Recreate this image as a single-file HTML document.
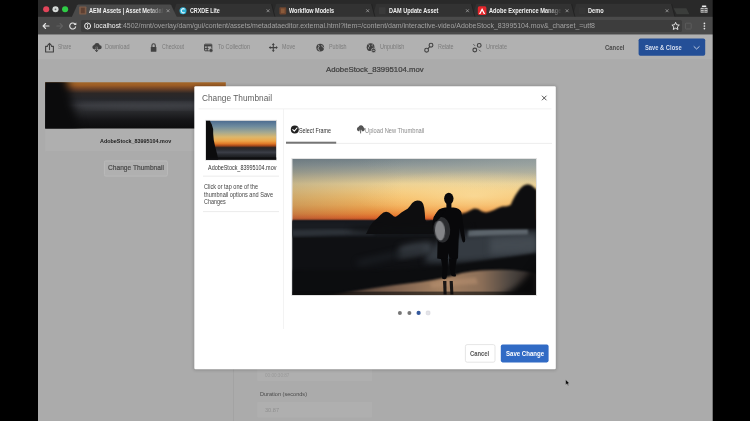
<!DOCTYPE html>
<html lang="en"><head><meta charset="utf-8"><title>AEM Assets | Asset Metadata Editor</title>
<style>
html,body{margin:0;padding:0;background:#000;}
body{width:750px;height:421px;overflow:hidden;font-family:"Liberation Sans",sans-serif;}
#root{position:relative;width:750px;height:421px;overflow:hidden;background:#000;}
#bg{position:absolute;left:0;top:0;width:750px;height:421px;display:block;}
.t{position:absolute;white-space:nowrap;transform-origin:0 50%;display:block;}

</style></head>
<body>
<div id="root">
<svg id="bg" width="750" height="421" viewBox="0 0 750 421">
<defs>
  <linearGradient id="sky" gradientUnits="userSpaceOnUse" x1="0" y1="159" x2="0" y2="295">
    <stop offset="0.0000" stop-color="#76848a"/>
    <stop offset="0.0441" stop-color="#8a9494"/>
    <stop offset="0.0956" stop-color="#a8a896"/>
    <stop offset="0.1397" stop-color="#cbbd95"/>
    <stop offset="0.1838" stop-color="#ead094"/>
    <stop offset="0.2353" stop-color="#f4ca7e"/>
    <stop offset="0.2868" stop-color="#f6be68"/>
    <stop offset="0.3382" stop-color="#f4ae56"/>
    <stop offset="0.3750" stop-color="#f09a44"/>
    <stop offset="0.4044" stop-color="#ec8636"/>
    <stop offset="0.4301" stop-color="#e2682a"/>
    <stop offset="0.4456" stop-color="#c04e20"/>
    <stop offset="0.4559" stop-color="#4a2c26"/>
    <stop offset="0.4669" stop-color="#1d2127"/>
    <stop offset="1.0000" stop-color="#1d2127"/>
  </linearGradient>
  <linearGradient id="sea" x1="0" y1="0" x2="0" y2="1">
    <stop offset="0" stop-color="#23272e"/>
    <stop offset="0.12" stop-color="#3a4048"/>
    <stop offset="0.22" stop-color="#1d2025"/>
    <stop offset="0.5" stop-color="#121316"/>
    <stop offset="1" stop-color="#0e0e10"/>
  </linearGradient>
  <linearGradient id="sand" x1="0" y1="0" x2="1" y2="0">
    <stop offset="0" stop-color="#382b25"/>
    <stop offset="0.32" stop-color="#7a5e4c"/>
    <stop offset="0.56" stop-color="#a68262"/>
    <stop offset="0.74" stop-color="#8c6f58"/>
    <stop offset="0.88" stop-color="#4c4540"/>
    <stop offset="1" stop-color="#262120"/>
  </linearGradient>
  <linearGradient id="tsky" gradientUnits="userSpaceOnUse" x1="0" y1="120.7" x2="0" y2="159.7">
    <stop offset="0" stop-color="#4c6c90"/>
    <stop offset="0.15" stop-color="#6f8c9e"/>
    <stop offset="0.30" stop-color="#a5a990"/>
    <stop offset="0.42" stop-color="#dcb76c"/>
    <stop offset="0.52" stop-color="#eda548"/>
    <stop offset="0.59" stop-color="#e07a28"/>
    <stop offset="0.64" stop-color="#a84a1a"/>
    <stop offset="0.69" stop-color="#2e2624"/>
    <stop offset="0.75" stop-color="#2b2d33"/>
    <stop offset="0.81" stop-color="#3b3e47"/>
    <stop offset="0.88" stop-color="#26282d"/>
    <stop offset="1" stop-color="#121315"/>
  </linearGradient>
  <linearGradient id="bsky" gradientUnits="userSpaceOnUse" x1="0" y1="82" x2="0" y2="129">
    <stop offset="0" stop-color="#a4692b"/>
    <stop offset="0.07" stop-color="#9c5c25"/>
    <stop offset="0.15" stop-color="#6a4026"/>
    <stop offset="0.24" stop-color="#2c2726"/>
    <stop offset="0.36" stop-color="#26272b"/>
    <stop offset="0.50" stop-color="#393a3f"/>
    <stop offset="0.64" stop-color="#27282b"/>
    <stop offset="0.82" stop-color="#141416"/>
    <stop offset="1" stop-color="#0c0c0d"/>
  </linearGradient>
  <radialGradient id="glow" cx="0.5" cy="0.5" r="0.5">
    <stop offset="0" stop-color="#fce6ac" stop-opacity="0.6"/>
    <stop offset="0.5" stop-color="#fbe0a0" stop-opacity="0.3"/>
    <stop offset="1" stop-color="#fbe0a0" stop-opacity="0"/>
  </radialGradient>
  <radialGradient id="rlight" cx="0.5" cy="0.5" r="0.5">
    <stop offset="0" stop-color="#c8ccc0" stop-opacity="0.36"/>
    <stop offset="0.55" stop-color="#c8ccc0" stop-opacity="0.16"/>
    <stop offset="1" stop-color="#c8ccc0" stop-opacity="0"/>
  </radialGradient>
  <linearGradient id="lshade" x1="0" y1="0" x2="1" y2="0">
    <stop offset="0" stop-color="#4a5660" stop-opacity="0.22"/>
    <stop offset="0.45" stop-color="#4a5660" stop-opacity="0"/>
    <stop offset="1" stop-color="#4a5660" stop-opacity="0"/>
  </linearGradient>
  <filter color-interpolation-filters="sRGB" id="b1" x="-10%" y="-10%" width="120%" height="120%"><feGaussianBlur stdDeviation="0.7"/></filter>
  <filter color-interpolation-filters="sRGB" id="b12" x="-10%" y="-20%" width="120%" height="140%"><feGaussianBlur stdDeviation="1.1"/></filter>
  <filter color-interpolation-filters="sRGB" id="b2" x="-10%" y="-10%" width="120%" height="120%"><feGaussianBlur stdDeviation="1.6"/></filter>
  <filter color-interpolation-filters="sRGB" id="b25" x="-40%" y="-30%" width="180%" height="160%"><feGaussianBlur stdDeviation="4"/></filter>
  <filter color-interpolation-filters="sRGB" id="b3" x="-20%" y="-20%" width="140%" height="140%"><feGaussianBlur stdDeviation="3"/></filter>
  <filter color-interpolation-filters="sRGB" id="b05" x="-10%" y="-10%" width="120%" height="120%"><feGaussianBlur stdDeviation="0.45"/></filter>
  <filter color-interpolation-filters="sRGB" id="sh" x="-5%" y="-5%" width="110%" height="110%"><feGaussianBlur stdDeviation="1.6"/></filter>
  <clipPath id="cimg"><rect x="292.5" y="159" width="243.5" height="136"/></clipPath>
  <clipPath id="cth"><rect x="206" y="120.7" width="70.2" height="39"/></clipPath>
  <clipPath id="cbg"><rect x="45.2" y="82.2" width="180.6" height="46.4"/></clipPath>
</defs>

<!-- browser window -->
<rect x="38" y="0" width="675" height="421" fill="#ababab"/>
<!-- title bar -->
<rect x="38" y="0" width="675" height="17" fill="#292929"/>
<!-- inactive tabs -->
<g fill="#323232">
  <path d="M172.5 16.9 L176 4.4 Q176.3 3.8 177 3.8 H270.5 Q271.2 3.8 271.5 4.4 L275 16.9 Z"/>
  <path d="M272.5 16.9 L276 4.4 Q276.3 3.8 277 3.8 H370.5 Q371.2 3.8 371.5 4.4 L375 16.9 Z"/>
  <path d="M372.5 16.9 L376 4.4 Q376.3 3.8 377 3.8 H470.5 Q471.2 3.8 471.5 4.4 L475 16.9 Z"/>
  <path d="M472.5 16.9 L476 4.4 Q476.3 3.8 477 3.8 H570.5 Q571.2 3.8 571.5 4.4 L575 16.9 Z"/>
  <path d="M572.5 16.9 L576 4.4 Q576.3 3.8 577 3.8 H670.5 Q671.2 3.8 671.5 4.4 L675 16.9 Z"/>
</g>
<g stroke="#1f1f1f" stroke-width="0.8" fill="none">
  <path d="M275 16.9 L271.6 4.2"/>
  <path d="M375 16.9 L371.6 4.2"/>
  <path d="M475 16.9 L471.6 4.2"/>
  <path d="M575 16.9 L571.6 4.2"/>
  <path d="M675 16.9 L671.6 4.2"/>
</g>
<!-- new tab button -->
<path d="M673.6 8.2 H686.4 L689.4 14.2 H676.6 Z" fill="#3b3d3b"/>
<!-- address row -->
<rect x="38" y="16.8" width="675" height="17.4" fill="#4a4a4a"/>
<!-- active tab -->
<path d="M71.8 17 L77.2 5.2 Q77.6 4.6 78.4 4.6 H170 Q170.8 4.6 171.2 5.2 L176.8 17 Z" fill="#4a4a4a"/>
<rect x="38" y="34" width="675" height="0.6" fill="#3e3e3e"/>
<!-- url field -->
<rect x="81" y="20.1" width="601" height="12" rx="1.6" fill="#3d3d3d"/>
<!-- traffic lights -->
<circle cx="46.2" cy="9.3" r="3.05" fill="#e2455a"/>
<circle cx="55.5" cy="9.3" r="3.05" fill="#d6dad8"/><circle cx="55.5" cy="9.3" r="0.9" fill="#6a6e6c"/>
<circle cx="65.1" cy="9.3" r="3.05" fill="#2fcc46"/>
<g transform="translate(0,0.9)">
<!-- favicons -->
<rect x="79.2" y="5.6" width="7.2" height="8" rx="0.8" fill="#7e5c48"/>
<rect x="80.8" y="6.8" width="4" height="5.6" fill="#5e4032"/>
<circle cx="183" cy="9.9" r="3.5" fill="#2fb2d6"/>
<path d="M184.6 8.4 A2 2 0 1 0 184.6 11.4" stroke="#e8f8ff" stroke-width="1.1" fill="none"/>
<rect x="279.4" y="6.3" width="6.8" height="7.2" rx="0.8" fill="#6e452f"/>
<rect x="281" y="7.6" width="3.6" height="4.6" fill="#8a5a3a"/>
<rect x="379" y="6.4" width="6.6" height="7" rx="0.6" fill="#3a3a3a"/>
<rect x="477.8" y="5.4" width="8.6" height="8.8" rx="1.6" fill="#e3262b"/>
<path d="M482.1 7 L485.2 13.2 H483.8 L482.1 9.8 L480.4 13.2 H479 Z" fill="#fff"/>
<rect x="579" y="6.4" width="6.6" height="7" rx="0.6" fill="#353535"/>
<!-- tab close marks -->
<g stroke="#a6a6a6" stroke-width="0.75" fill="none" stroke-linecap="round">
  <path d="M166.9 8.7 l2.3 2.3 m0 -2.3 l-2.3 2.3"/>
  <path d="M266.9 8.7 l2.3 2.3 m0 -2.3 l-2.3 2.3"/>
  <path d="M366.5 8.7 l2.3 2.3 m0 -2.3 l-2.3 2.3"/>
  <path d="M466.3 8.7 l2.3 2.3 m0 -2.3 l-2.3 2.3"/>
  <path d="M565.9 8.7 l2.3 2.3 m0 -2.3 l-2.3 2.3"/>
  <path d="M665.9 8.7 l2.3 2.3 m0 -2.3 l-2.3 2.3"/>
</g>
</g>
<!-- incognito-ish icon -->
<g>
  <rect x="701.8" y="5.4" width="4.6" height="1.6" rx="0.7" fill="#f2f2f2"/>
  <rect x="700.6" y="7.8" width="7" height="5" rx="0.6" fill="#bdbdbd"/>
  <rect x="700.6" y="9.1" width="7" height="0.8" fill="#444"/>
  <rect x="703.7" y="7.8" width="0.8" height="5" fill="#555"/>
  <rect x="700.6" y="11.1" width="7" height="0.7" fill="#666"/>
</g>
<!-- nav icons -->
<g stroke="#e4e4e4" stroke-width="1.1" fill="none" stroke-linecap="round" stroke-linejoin="round">
  <path d="M49 26 H43.2 M45.6 23.5 L43.1 26 L45.6 28.5"/>
</g>
<g stroke="#606060" stroke-width="1.1" fill="none" stroke-linecap="round" stroke-linejoin="round">
  <path d="M56.8 26 H62.6 M60.1 23.5 L62.6 26 L60.1 28.5"/>
</g>
<g stroke="#e4e4e4" stroke-width="1.1" fill="none" stroke-linecap="round">
  <path d="M75 24.1 A3 3 0 1 0 75.6 26.8"/>
</g>
<path d="M76.3 22.4 V25.1 H73.6 Z" fill="#e4e4e4"/>
<circle cx="87.6" cy="26" r="3" fill="none" stroke="#f0f0f0" stroke-width="1"/>
<rect x="87.1" y="25.4" width="1" height="2.4" fill="#f0f0f0"/><rect x="87.1" y="23.9" width="1" height="1" fill="#f0f0f0"/>
<path d="M675.6 22.4 l1.1 2.4 2.6 .3 -1.9 1.8 .5 2.6 -2.3 -1.3 -2.3 1.3 .5 -2.6 -1.9 -1.8 2.6 -.3z" fill="none" stroke="#f0f0f0" stroke-width="0.9" stroke-linejoin="round"/>
<rect x="685.4" y="23.2" width="5.8" height="5.8" rx="0.8" fill="none" stroke="#5e5e5e" stroke-width="0.9"/>
<g fill="#e8e8e8"><circle cx="704.4" cy="23.4" r="0.85"/><circle cx="704.4" cy="26" r="0.85"/><circle cx="704.4" cy="28.6" r="0.85"/></g>

<!-- page toolbar -->
<rect x="38" y="34.6" width="675" height="24.7" fill="#b1b1b1"/>
<!-- toolbar icons -->
<g fill="none" stroke="#424242" stroke-width="1.1" stroke-linejoin="round" stroke-linecap="round">
  <!-- share -->
  <path d="M47.4 46.4 H45.6 V52 H53.4 V46.4 H51.6"/>
  <path d="M49.5 49.6 V43.6 M47.6 45.4 L49.5 43.4 L51.4 45.4"/>
</g>
<!-- download cloud -->
<g fill="#424242">
  <path d="M94 49.2 A2.2 2.2 0 0 1 94.2 44.9 A3 3 0 0 1 99.8 45.2 A2 2 0 0 1 99.6 49.2 Z"/>
</g>
<path d="M96.6 46.8 V51 M95.2 49.8 L96.6 51.4 L98 49.8" stroke="#b1b1b1" stroke-width="1.7" fill="none"/>
<path d="M96.6 47 V51.4 M95.2 50 L96.6 51.8 L98 50" stroke="#424242" stroke-width="0.9" fill="none" stroke-linecap="round"/>
<!-- checkout lock -->
<rect x="150.8" y="47" width="5.6" height="4.8" rx="0.6" fill="#424242"/>
<path d="M151.9 47 V45.4 A1.7 1.7 0 0 1 155.3 45.4 V47" fill="none" stroke="#424242" stroke-width="1.1"/>
<!-- to collection -->
<g fill="none" stroke="#424242" stroke-width="1">
  <rect x="204.6" y="44.2" width="7.2" height="6.6" rx="0.5"/>
  <path d="M204.6 45.6 H211.8" stroke-width="1.6"/><path d="M207.2 46.2 V50.8 M204.6 48.6 H208.6"/>
</g>
<circle cx="211" cy="50.4" r="1.9" fill="#424242" stroke="#b1b1b1" stroke-width="0.5"/>
<!-- move -->
<g stroke="#424242" stroke-width="1.1" fill="none" stroke-linecap="round" stroke-linejoin="round">
  <path d="M273.3 44.4 V50.8 M270 47.6 H276.6"/>
</g>
<g fill="#424242">
  <path d="M273.3 43.1 l1.5 1.8 h-3z M273.3 52.1 l1.5 -1.8 h-3z M268.8 47.6 l1.8 -1.5 v3z M277.8 47.6 l-1.8 -1.5 v3z"/>
</g>
<!-- publish globe -->
<circle cx="320.2" cy="47.6" r="3.9" fill="#424242"/>
<path d="M318 45 q1.6 .4 1.2 1.8 q-1.8 .8 -1 2.4 q1.4 .2 1.2 1.6 M322 44.8 q-.8 1.2 .4 2 q1.4 .2 1.4 1.6" stroke="#b1b1b1" stroke-width="0.8" fill="none"/>
<!-- unpublish globe -->
<circle cx="370.6" cy="47.2" r="3.9" fill="#424242"/>
<path d="M368.4 44.6 q1.6 .4 1.2 1.8 q-1.8 .8 -1 2.4 M372.4 44.4 q-.8 1.2 .4 2" stroke="#b1b1b1" stroke-width="0.8" fill="none"/>
<circle cx="373.6" cy="50.4" r="2.3" fill="#424242" stroke="#b1b1b1" stroke-width="0.7"/>
<path d="M372.5 50.4 H374.7" stroke="#b1b1b1" stroke-width="0.8"/>
<!-- relate -->
<g fill="none" stroke="#424242" stroke-width="1.1">
  <circle cx="426.6" cy="50.2" r="1.9"/><circle cx="431" cy="45.2" r="1.9"/><path d="M427.9 48.8 L429.7 46.6"/>
</g>
<!-- unrelate -->
<g fill="none" stroke="#424242" stroke-width="1.1" stroke-linecap="round">
  <circle cx="474.8" cy="50" r="1.9"/><circle cx="479.2" cy="45.4" r="1.9"/>
  <path d="M473.6 44.4 L474.8 45.6 M480.4 51.2 L479.2 50" stroke-width="0.8"/>
</g>
<!-- save & close -->
<rect x="638.6" y="38.4" width="66.6" height="17.4" rx="1.8" fill="#244f97"/>
<path d="M694 46.6 L696.6 49 L699.2 46.6" stroke="#cfd8ea" stroke-width="0.9" fill="none" stroke-linecap="round" stroke-linejoin="round"/>

<!-- page: asset card -->
<rect x="45.2" y="128.4" width="180.6" height="22.8" fill="#afafaf"/>
<g clip-path="url(#cbg)">
  <rect x="45" y="82" width="181" height="47" fill="url(#bsky)"/>
  <ellipse cx="150" cy="106" rx="70" ry="3" fill="#404247" filter="url(#b3)"/>
  <path d="M30 70 H65 Q69 90 72 102 Q76 116 82 140 H30 Z" fill="#0b0b0c" filter="url(#b25)"/>
</g>
<!-- change thumbnail btn -->
<rect x="104.4" y="160.9" width="63" height="15.2" rx="1.4" fill="#b0b0b0" stroke="#bcbcbc" stroke-width="0.8"/>

<!-- form behind modal -->
<rect x="233.2" y="369" width="0.8" height="52" fill="#a2a2a2"/>
<rect x="257.2" y="366" width="115" height="15" rx="1" fill="#afafaf"/>
<rect x="257.2" y="402" width="115" height="15.4" rx="1" fill="#afafaf"/>

<!-- modal shadow + body -->
<rect x="193.4" y="85.6" width="363.2" height="285" rx="2" fill="#000" opacity="0.16" filter="url(#sh)"/>
<rect x="194.3" y="86.2" width="361.5" height="283" rx="1.2" fill="#fff"/>
<rect x="198.5" y="108.5" width="353" height="0.8" fill="#eeeeee"/>
<rect x="283.2" y="109" width="0.8" height="220" fill="#f0f0f0"/>
<!-- close x -->
<path d="M542.2 96 l4 4 m0 -4 l-4 4" stroke="#444" stroke-width="0.9" stroke-linecap="round"/>
<!-- left thumb -->
<rect x="205.2" y="119.9" width="71.8" height="40.6" fill="#d9d9d9"/>
<g clip-path="url(#cth)">
  <rect x="206" y="120.7" width="70.2" height="39" fill="url(#tsky)"/>
  <path d="M203 118 H209.6 Q210 122 211.6 124 Q213.6 128 213.2 134 Q213.4 140 215 146 Q217 153 218.8 162 H203 Z" fill="#0c0c0d" filter="url(#b1)"/>
  <rect x="206" y="157.4" width="71" height="3" fill="#0e0e10" filter="url(#b1)"/>
</g>
<rect x="203" y="175.7" width="76" height="0.8" fill="#e6e6e6"/>
<rect x="203" y="211.3" width="76" height="0.8" fill="#e6e6e6"/>
<!-- tabs -->
<rect x="286" y="142.9" width="266" height="0.8" fill="#e9e9e9"/>
<rect x="286" y="141.7" width="50.2" height="2" fill="#757575"/>
<circle cx="294.8" cy="129.5" r="4" fill="#222"/>
<path d="M292.8 129.6 L294.3 131.2 L297 128" stroke="#fff" stroke-width="1.1" fill="none" stroke-linecap="round" stroke-linejoin="round"/>
<!-- upload icon -->
<path d="M358.5 131.2 A2.2 2.2 0 0 1 358.4 127 A2.8 2.8 0 0 1 363.7 127.6 A1.9 1.9 0 0 1 363.3 131.2 H361.7 V129.6 H359.5 V131.2 Z" fill="#555"/>
<path d="M360.6 133.4 V129 M359.2 130.3 L360.6 128.8 L362 130.3" stroke="#555" stroke-width="0.9" fill="none"/>

<!-- main image -->
<rect x="291.4" y="158" width="245.6" height="138" fill="#e2e2e2"/>
<g clip-path="url(#cimg)">
  <rect x="292" y="159" width="245" height="136" fill="url(#sky)"/>
  <!-- sun glow -->
  <ellipse cx="474" cy="196" rx="120" ry="26" fill="url(#glow)"/>
  <rect x="292" y="159" width="245" height="62" fill="url(#lshade)"/>
  <ellipse cx="545" cy="156" rx="190" ry="36" fill="url(#rlight)"/>
  <!-- sea / land base -->
  <rect x="292" y="220.6" width="245" height="75" fill="#0f1013"/>
  <rect x="286" y="220.6" width="257" height="16" fill="#191c21" filter="url(#b2)"/>
  <!-- left streak -->
  <path d="M292 230 Q330 228.8 374 229.8 L374 234.4 Q330 235 292 236.6 Z" fill="#2d3238" filter="url(#b2)"/>
  <!-- water area mid/right -->
  <path d="M440 240 Q454 236 472 234 Q500 232 537 231 V256 Q500 260 468 262 Q442 263 424 262 Q430 248 440 240 Z" fill="#353b42" filter="url(#b3)"/>
  <path d="M490 238 Q515 236 537 236 V252 Q515 254 490 254 Z" fill="#434a51" filter="url(#b3)"/>
  <path d="M468 230.2 Q500 228.4 528 228.2 L528 234.4 Q500 234.8 468 236.6 Z" fill="#5c646b" filter="url(#b12)"/>
  <path d="M400 247 Q416 242.6 431.6 241.4 L431.6 253 Q416 255 398 258 Z" fill="#3f454c" filter="url(#b3)"/>
  <path d="M356 261 Q392 252 424 246.6 L426 250.6 Q394 258 360 266 Z" fill="#1d2126" opacity="0.8" filter="url(#b3)"/>
  <!-- dark diagonal band -->
  <path d="M292 270 Q380 272 440 267 Q490 260 537 253 V274 Q512 269 485 269 Q462 272 445 278 Q420 282 372 287 Q340 292 320 297 H292 Z" fill="#0c0d0f" filter="url(#b2)"/>
  <!-- wet sand -->
  <path d="M322 297 Q372 287.4 420 282 Q445 278.6 462 273 Q485 269 512 270 Q526 271 537 274 V297 Z" fill="url(#sand)" filter="url(#b12)"/>
  <path d="M430 283 Q452 279 476 277.4 L478 284 Q456 284.6 432 288 Z" fill="#b89070" opacity="0.55" filter="url(#b2)"/>
  <!-- bottom-right vignette -->
  <path d="M496 297 Q520 290 537 262 V297 Z" fill="#09090a" filter="url(#b3)"/>
  <rect x="286" y="291.6" width="257" height="6" fill="#0c0c0d" opacity="0.6" filter="url(#b1)"/>
  <!-- rocks left group -->
  <path d="M366 234 L370 226 L373 222 L377 218.6 L380.4 215 L383.4 212.6 L386.2 211.8 L389 212.6 L391.6 214.6 L394 216.4 L395.8 216.8 L398.4 215 L401.4 212.6 L404.6 210.6 L407.6 208.8 L410 206 L412.2 203 L414.6 201.2 L417.2 200.5 L419.8 200.8 L421.8 201.8 L423.2 204 L424.2 207.8 L424.8 213 L425.2 219.6 L426.6 221.8 L431.2 220.4 L437 221 L442 234 Z" fill="#0d0d0f" filter="url(#b1)"/>
  <!-- rocks right group -->
  <path d="M454 215 L462 213.4 L466 212.4 L470 210.4 L474 208.6 L478 209 L482 211.4 L486 212.6 L490 211.6 L494 210 L498 208 L502 206.6 L507 206.2 L510.6 205 L512.6 200.4 L515 196 L517.6 192 L520.4 188.2 L523.6 185.4 L527.2 184.2 L531 185 L534 187.4 L537 190 V229 H452 Z" fill="#0d0d0f" filter="url(#b12)"/>
  <path d="M350 227 Q400 224 470 225 V229 Q450 233 430 235 Q390 236 350 231 Z" fill="#0e0f11" opacity="0.75" filter="url(#b3)"/>
  <!-- surfer -->
  <g filter="url(#b05)">
    <g fill="#08080a">
      <ellipse cx="448.8" cy="198.6" rx="4.7" ry="5.8"/>
      <rect x="446.4" y="202" width="5" height="6.4"/>
      <path d="M436.8 212.4 Q438 208.4 445 207.4 H453.4 Q460 208.2 461.4 212 L463.4 226 L465.2 239 Q465.4 242 463.8 242.4 Q462.4 242.4 461.8 239.6 L459.4 227 L458.6 241 L458 258.4 Q453 259.6 449.4 258.6 L448.6 253 L447.8 258.8 Q442 259.8 437.2 258.4 L437.6 241 L433.4 232 Q431.6 224 433.6 217 Z"/>
      <path d="M440.8 258 L448 258.6 L447.6 268 L446.8 276.4 Q447 278.8 444.6 279.2 Q441.6 279.2 442 277 L442.6 268 Z"/>
      <path d="M448.8 258.4 L457 258 L455.6 266 L454.6 272.6 Q456.6 275 455.6 276.4 Q453 277 451.2 275.2 L449.8 268 Z"/>
    </g>
    <ellipse cx="441.8" cy="229.8" rx="8.4" ry="12.8" fill="#2c2d30" transform="rotate(-4 441.8 229.8)"/>
    <ellipse cx="440" cy="230.6" rx="5" ry="9.8" fill="#9a9b9e" opacity="0.8" transform="rotate(-4 440 230.6)" filter="url(#b1)"/>
    <path d="M437 212 Q441 209.6 446 211 Q442 214 439.6 218.4 Q436.4 222 433.6 222.6 Q433.6 216 437 212 Z" fill="#08080a"/>
    <g fill="#0c0c0e" opacity="0.9">
      <path d="M443 281 H446.4 L446.6 294.6 H443.6 Z"/>
      <path d="M449.6 281 H452.8 L453.4 294.6 H450.4 Z"/>
    </g>
  </g>
</g>
<!-- carousel dots -->
<circle cx="399.9" cy="312.9" r="2" fill="#767676"/>
<circle cx="409.4" cy="312.9" r="2" fill="#767676"/>
<circle cx="418.6" cy="312.9" r="2.1" fill="#34589c"/>
<rect x="426.2" y="311" width="3.8" height="3.8" rx="1" fill="#e4e4e8" stroke="#cfcfd6" stroke-width="0.5"/>
<!-- modal buttons -->
<rect x="465.4" y="344.6" width="29.6" height="17.6" rx="1.8" fill="#fff" stroke="#dedede" stroke-width="0.8"/>
<rect x="500.8" y="344.6" width="47.8" height="17.8" rx="1.8" fill="#316bc5"/>
<!-- mouse cursor -->
<path d="M565.6 379.6 L565.6 385 L567 383.8 L568 385.8 L568.8 385.4 L567.9 383.5 L569.6 383.4 Z" fill="#0a0a0a" stroke="#d8d8d8" stroke-width="0.35"/>
<!-- black bars -->
<rect x="0" y="0" width="37.75" height="421" fill="#000"/>
<rect x="712.7" y="0" width="37.3" height="421" fill="#000"/>
</svg>

<span class="t" id="t0" style="left:89.00px;top:6.80px;font-size:6.5px;line-height:7.80px;color:#f0f0f0;font-weight:700;transform:scaleX(0.8603);-webkit-mask-image:linear-gradient(90deg,#000 78%,transparent 100%);mask-image:linear-gradient(90deg,#000 78%,transparent 100%);">AEM Assets | Asset Metadat</span>
<span class="t" id="t1" style="left:189.60px;top:6.80px;font-size:6.5px;line-height:7.80px;color:#f0f0f0;font-weight:700;transform:scaleX(0.8249);">CRXDE Lite</span>
<span class="t" id="t2" style="left:289.00px;top:6.80px;font-size:6.5px;line-height:7.80px;color:#f0f0f0;font-weight:700;transform:scaleX(0.8438);">Workflow Models</span>
<span class="t" id="t3" style="left:389.00px;top:6.80px;font-size:6.5px;line-height:7.80px;color:#f0f0f0;font-weight:700;transform:scaleX(0.8529);">DAM Update Asset</span>
<span class="t" id="t4" style="left:488.60px;top:6.80px;font-size:6.5px;line-height:7.80px;color:#f0f0f0;font-weight:700;transform:scaleX(0.8751);-webkit-mask-image:linear-gradient(90deg,#000 78%,transparent 100%);mask-image:linear-gradient(90deg,#000 78%,transparent 100%);">Adobe Experience Manage</span>
<span class="t" id="t5" style="left:588.40px;top:6.80px;font-size:6.5px;line-height:7.80px;color:#f0f0f0;font-weight:700;transform:scaleX(0.8637);">Demo</span>
<span class="t" id="t6" style="left:94.00px;top:21.80px;font-size:7.0px;line-height:8.40px;color:#f4f4f4;font-weight:400;transform:scaleX(0.9768);">localhost</span>
<span class="t" id="t7" style="left:121.00px;top:21.80px;font-size:7.0px;line-height:8.40px;color:#a2a2a2;font-weight:400;transform:scaleX(0.9968);">:4502/mnt/overlay/dam/gui/content/assets/metadataeditor.external.html?item=/content/dam/interactive-video/AdobeStock_83995104.mov&amp;_charset_=utf8</span>
<span class="t" id="t8" style="left:58.40px;top:43.46px;font-size:6.4px;line-height:7.68px;color:#7b7b7b;font-weight:400;transform:scaleX(0.7736);">Share</span>
<span class="t" id="t9" style="left:105.40px;top:43.46px;font-size:6.4px;line-height:7.68px;color:#7b7b7b;font-weight:400;transform:scaleX(0.8655);">Download</span>
<span class="t" id="t10" style="left:161.60px;top:43.46px;font-size:6.4px;line-height:7.68px;color:#7b7b7b;font-weight:400;transform:scaleX(0.8148);">Checkout</span>
<span class="t" id="t11" style="left:217.60px;top:43.46px;font-size:6.4px;line-height:7.68px;color:#7b7b7b;font-weight:400;transform:scaleX(0.8745);">To Collection</span>
<span class="t" id="t12" style="left:282.40px;top:43.46px;font-size:6.4px;line-height:7.68px;color:#7b7b7b;font-weight:400;transform:scaleX(0.8440);">Move</span>
<span class="t" id="t13" style="left:329.40px;top:43.46px;font-size:6.4px;line-height:7.68px;color:#7b7b7b;font-weight:400;transform:scaleX(0.8393);">Publish</span>
<span class="t" id="t14" style="left:380.00px;top:43.46px;font-size:6.4px;line-height:7.68px;color:#7b7b7b;font-weight:400;transform:scaleX(0.8585);">Unpublish</span>
<span class="t" id="t15" style="left:438.00px;top:43.46px;font-size:6.4px;line-height:7.68px;color:#7b7b7b;font-weight:400;transform:scaleX(0.8440);">Relate</span>
<span class="t" id="t16" style="left:486.00px;top:43.46px;font-size:6.4px;line-height:7.68px;color:#7b7b7b;font-weight:400;transform:scaleX(0.8693);">Unrelate</span>
<span class="t" id="t17" style="left:604.60px;top:42.94px;font-size:7.6px;line-height:9.12px;color:#4a4a4a;font-weight:700;transform:scaleX(0.7789);">Cancel</span>
<span class="t" id="t18" style="left:645.00px;top:42.94px;font-size:7.6px;line-height:9.12px;color:#d6deee;font-weight:700;transform:scaleX(0.7605);">Save &amp; Close</span>
<span class="t" id="t19" style="left:326.40px;top:65.38px;font-size:7.7px;line-height:9.24px;color:#3e3e3e;font-weight:400;transform:scaleX(1.0104);-webkit-text-stroke:0.22px #3e3e3e;">AdobeStock_83995104.mov</span>
<span class="t" id="t20" style="left:100.00px;top:136.74px;font-size:6.1px;line-height:7.32px;color:#222;font-weight:700;transform:scaleX(0.8869);">AdobeStock_83995104.mov</span>
<span class="t" id="t21" style="left:107.60px;top:164.06px;font-size:7.4px;line-height:8.88px;color:#4a4a4a;font-weight:400;transform:scaleX(0.8969);-webkit-text-stroke:0.22px #4a4a4a;">Change Thumbnail</span>
<span class="t" id="t22" style="left:265.00px;top:371.28px;font-size:6.2px;line-height:7.44px;color:#9a9a9a;font-weight:400;transform:scaleX(0.7465);">00:00:30:87</span>
<span class="t" id="t23" style="left:260.00px;top:390.66px;font-size:5.9px;line-height:7.08px;color:#4a4a4a;font-weight:400;transform:scaleX(0.9444);">Duration (seconds)</span>
<span class="t" id="t24" style="left:265.00px;top:405.88px;font-size:6.2px;line-height:7.44px;color:#8f8f8f;font-weight:400;transform:scaleX(0.9041);">30.87</span>
<span class="t" id="t25" style="left:201.60px;top:91.96px;font-size:9.9px;line-height:11.88px;color:#606060;font-weight:400;transform:scaleX(0.8407);">Change Thumbnail</span>
<span class="t" id="t26" style="left:207.60px;top:164.12px;font-size:6.8px;line-height:8.16px;color:#333;font-weight:400;transform:scaleX(0.8009);">AdobeStock_83995104.mov</span>
<span class="t" id="t27" style="left:204.00px;top:183.04px;font-size:6.6px;line-height:7.92px;color:#444;font-weight:400;transform:scaleX(0.8417);">Click or tap one of the</span>
<span class="t" id="t28" style="left:204.00px;top:190.74px;font-size:6.6px;line-height:7.92px;color:#444;font-weight:400;transform:scaleX(0.8478);">thumbnail options and Save</span>
<span class="t" id="t29" style="left:204.00px;top:198.44px;font-size:6.6px;line-height:7.92px;color:#444;font-weight:400;transform:scaleX(0.8180);">Changes</span>
<span class="t" id="t30" style="left:299.00px;top:126.84px;font-size:6.6px;line-height:7.92px;color:#333;font-weight:400;transform:scaleX(0.8159);">Select Frame</span>
<span class="t" id="t31" style="left:364.70px;top:126.84px;font-size:6.6px;line-height:7.92px;color:#8a8a8a;font-weight:400;transform:scaleX(0.8667);">Upload New Thumbnail</span>
<span class="t" id="t32" style="left:470.40px;top:349.78px;font-size:7.2px;line-height:8.64px;color:#555;font-weight:700;transform:scaleX(0.8143);">Cancel</span>
<span class="t" id="t33" style="left:505.60px;top:349.78px;font-size:7.2px;line-height:8.64px;color:#fff;font-weight:700;transform:scaleX(0.8418);">Save Change</span>
</div>
</body></html>
